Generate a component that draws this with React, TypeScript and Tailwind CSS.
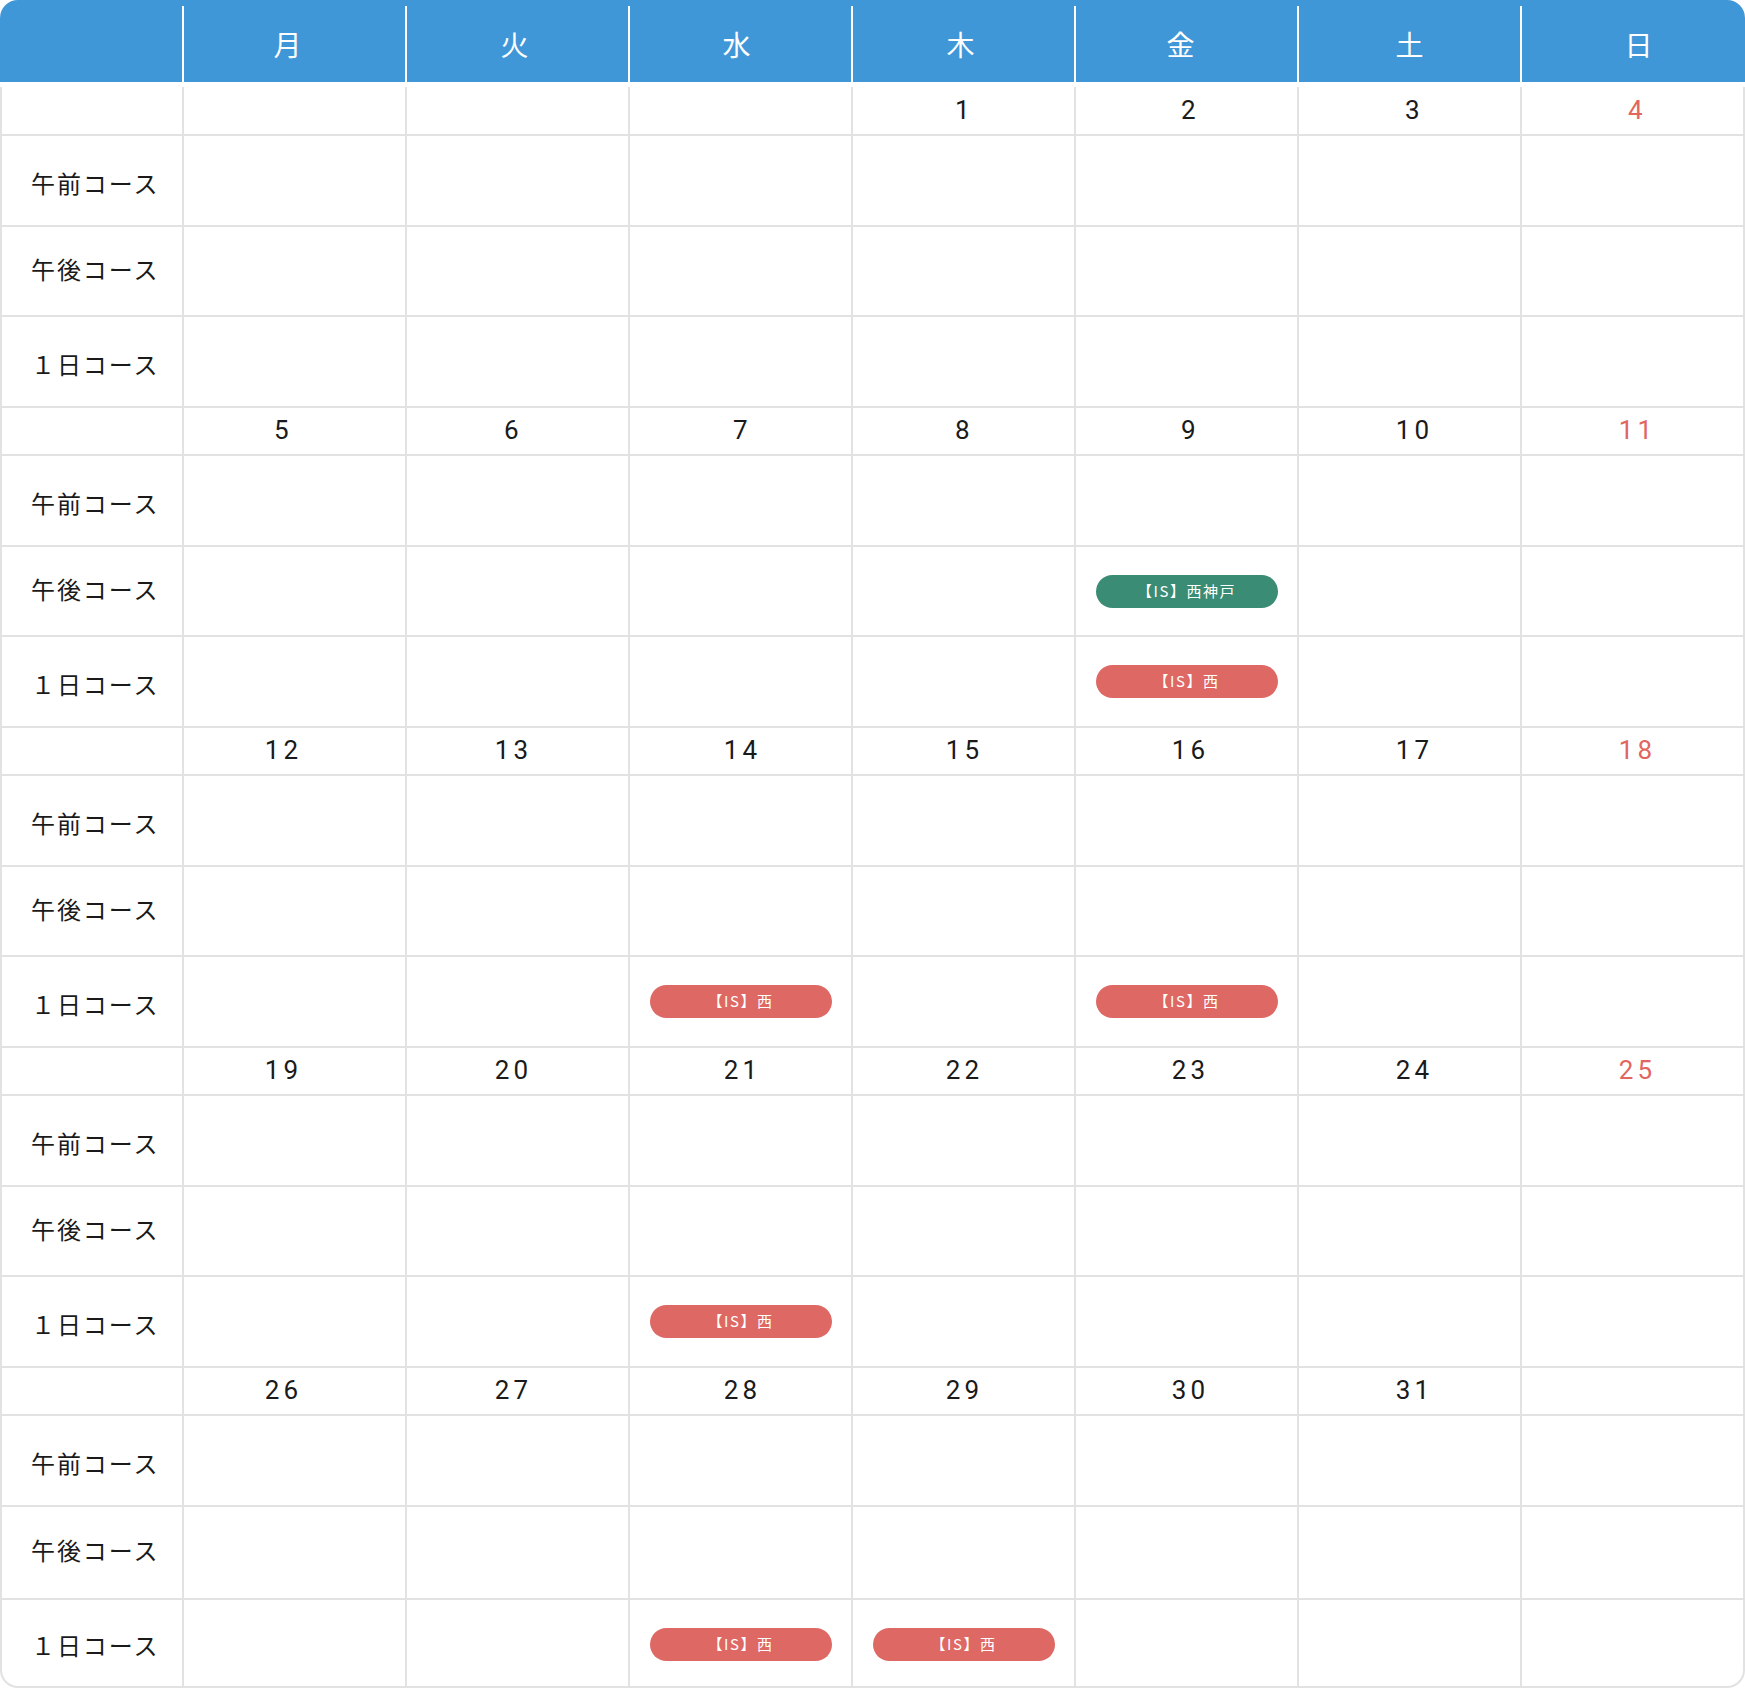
import React from "react";

const DAYS = ["月", "火", "水", "木", "金", "土", "日"];
const COURSES = ["午前コース", "午後コース", "１日コース"];
const WEEKS: string[][] = [
  ["", "", "", "1", "2", "3", "4"],
  ["5", "6", "7", "8", "9", "10", "11"],
  ["12", "13", "14", "15", "16", "17", "18"],
  ["19", "20", "21", "22", "23", "24", "25"],
  ["26", "27", "28", "29", "30", "31", ""],
];
const ROW_H = ["h-[91px]", "h-[90px]", "h-[91px]"];
const ROW_H_LAST = ["h-[91px]", "h-[93px]", "h-[91px]"];
const LABEL_PAD = ["pt-[5px]", "pb-[5px]", "pt-[5px]"];
const LABEL_PAD_LAST = ["pt-[5px]", "pb-[5px]", ""];

// small per-column horizontal shifts of the centred texts
const HEAD_SHIFT = ["pr-[14px]", "pr-[6px]", "pr-[8px]", "pr-[6px]", "pr-[12px]", "", "pl-[12px]"];
const DATE_SHIFT = ["pr-[22px]", "pr-[8px]", "pl-[4px]", "pl-[2px]", "pl-[8px]", "pl-[10px]", "pl-[10px]"];

type Ev = { text: string; green?: boolean };
const EVENTS: Record<string, Ev> = {
  "1-1-4": { text: "【IS】西神戸", green: true },
  "1-2-4": { text: "【IS】西" },
  "2-2-2": { text: "【IS】西" },
  "2-2-4": { text: "【IS】西" },
  "3-2-2": { text: "【IS】西" },
  "4-2-2": { text: "【IS】西" },
  "4-2-3": { text: "【IS】西" },
};

const FONT = { fontFamily: '"Noto Sans CJK JP", "Noto Sans", sans-serif' };
const DIGITS = { fontFamily: 'Roboto, "Noto Sans CJK JP", sans-serif' };

function Pill({ ev }: { ev: Ev }) {
  return (
    <div
      className={`flex h-[33px] w-[182px] items-center justify-center rounded-full text-[15px] tracking-[0.1em] text-white ${
        ev.green ? "bg-[#3a8c74]" : "bg-[#de6863]"
      }`}
    >
      {ev.text}
    </div>
  );
}

export default function App() {
  return (
    <div className="w-[1745px] bg-white" style={FONT}>
      <div className="grid h-[82px] grid-cols-[180px_repeat(7,1fr)] rounded-t-[18px] bg-[#3f97d7] px-[2px]">
        <div />
        {DAYS.map((d, i) => (
          <div
            key={d}
            className={`mt-[6px] flex items-center justify-center border-l-2 border-white text-[28px] text-white ${HEAD_SHIFT[i]}`}
          >
            {d}
          </div>
        ))}
      </div>
      <div className="h-[1601px] rounded-b-[18px] border-x-2 border-b-2 border-[#e2e2e2]">
        {WEEKS.map((dates, w) => (
          <div key={w}>
            <div
              className={`grid grid-cols-[180px_repeat(7,1fr)] border-b-2 border-[#e2e2e2] ${
                w === 0 ? "mt-[5px] h-[49px]" : "h-[48px]"
              }`}
            >
              <div />
              {dates.map((d, i) => (
                <div
                  key={i}
                  style={DIGITS}
                  className={`flex items-center justify-center border-l-2 border-[#e2e2e2] pb-[1px] text-[26px] tracking-[0.16em] ${
                    DATE_SHIFT[i]
                  } ${i === 6 ? "text-[#e0665f]" : "text-[#1a1a1a]"}`}
                >
                  {d}
                </div>
              ))}
            </div>
            {COURSES.map((c, r) => (
              <div
                key={c}
                className={`grid grid-cols-[180px_repeat(7,1fr)] border-b-2 border-[#e2e2e2] ${
                  w === 4 ? ROW_H_LAST[r] : ROW_H[r]
                }`}
              >
                <div
                  className={`flex items-center pl-[29px] text-[24px] tracking-[0.08em] text-[#1a1a1a] ${
                    w === 4 ? LABEL_PAD_LAST[r] : LABEL_PAD[r]
                  }`}
                >
                  {c}
                </div>
                {dates.map((_, i) => {
                  const ev = EVENTS[`${w}-${r}-${i}`];
                  return (
                    <div
                      key={i}
                      className="flex items-center justify-center border-l-2 border-[#e2e2e2]"
                    >
                      {ev ? <Pill ev={ev} /> : null}
                    </div>
                  );
                })}
              </div>
            ))}
          </div>
        ))}
      </div>
    </div>
  );
}
